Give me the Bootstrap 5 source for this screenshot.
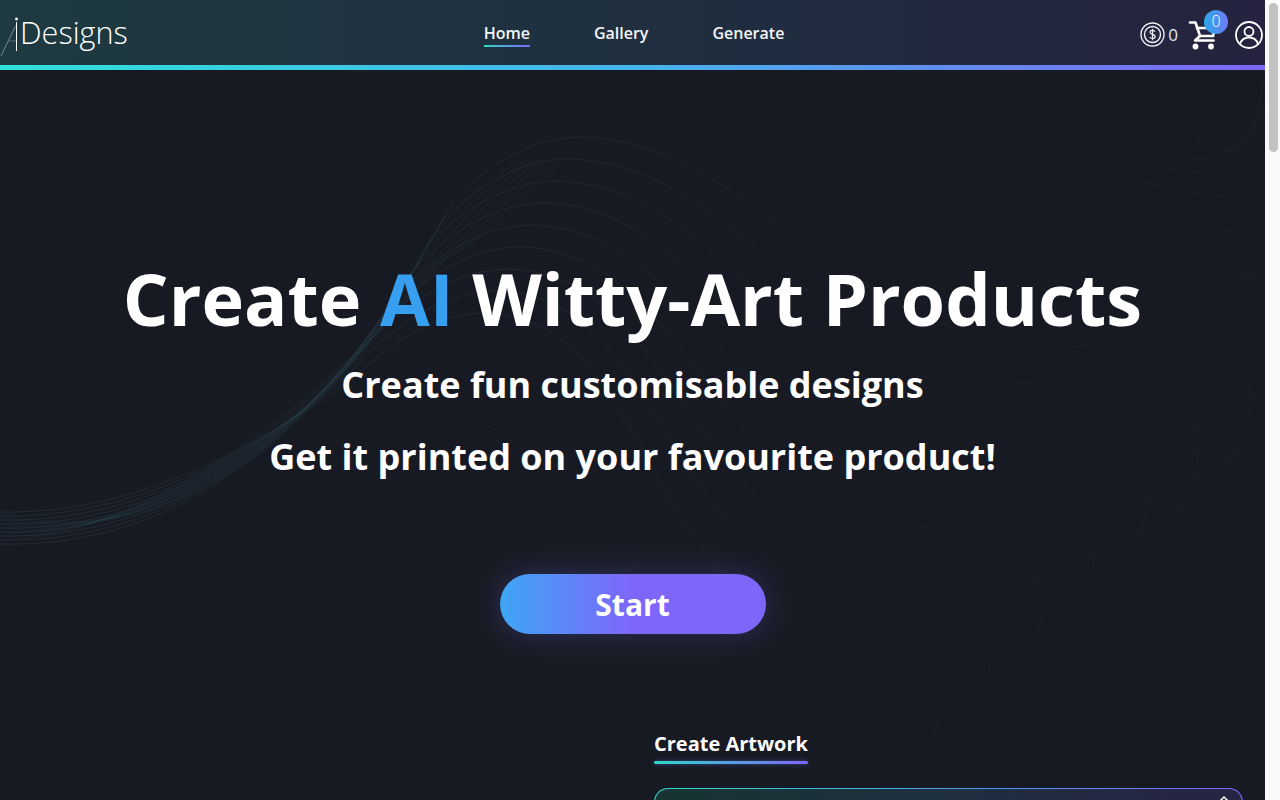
<!DOCTYPE html>
<html lang="en">
<head>
    <meta charset="UTF-8">
    <meta name="viewport" content="width=device-width, initial-scale=1.0">
    <title>iDesigns</title>
    <link rel="stylesheet" href="https://cdn.jsdelivr.net/npm/bootstrap@5.3.0/dist/css/bootstrap.min.css">
    <style>
        html, body {
            height: 100%;
            overflow: hidden;
        }

        body {
            background-color: #181a23;
            color: #fff;
            font-family: "Open Sans", sans-serif;
        }

        .page-main {
            width: 1265px;
            height: 800px;
            overflow: hidden;
        }

        .scroll-rail {
            width: 15px;
            height: 800px;
            padding: 3px 2px 0 4px;
            background: #fafafa;
        }

        .scroll-thumb {
            height: 149px;
            border-radius: 5px;
            background: #c2c2c2;
        }

        .top-bar {
            height: 70px;
            display: grid;
            grid-template-columns: 1fr auto 1fr;
            align-items: center;
            background-color: #1f2f40;
            background-image: linear-gradient(90deg, #1e3a40 0%, #1f2f40 50%, #25233f 100%);
            border-bottom: 5px solid;
            border-image: linear-gradient(90deg, #2fe0dc 0%, #45b4ec 50%, #7e66fb 100%) 1;
        }

        .logo-mark {
            width: 20px;
            height: 44px;
            margin-top: 13px;
        }

        .logo-text {
            font-size: 30.6px;
            font-weight: 300;
            color: #fff;
            line-height: 1;
        }

        .main-links {
            gap: 64px;
            margin-left: 3px;
        }

        .main-links .nav-link {
            color: #f4f5f7;
            font-size: 16px;
            font-weight: 600;
            line-height: 24px;
            padding: 2px 0 1px;
            position: relative;
        }

        .main-links .nav-link.active::after {
            content: "";
            position: absolute;
            left: 0;
            right: 0;
            bottom: -1px;
            height: 2px;
            background: linear-gradient(90deg, #2fd8c8, #7e66fb);
        }

        .user-tools {
            padding-right: 2px;
            padding-top: 4px;
        }

        .coin-count {
            font-size: 17px;
            color: #e8e8ee;
            margin-left: 3px;
            margin-right: 10px;
        }

        .cart-wrap {
            position: relative;
            width: 28px;
            height: 30px;
            margin-right: 19px;
        }

        .cart-count {
            position: absolute;
            left: 16px;
            top: -10px;
            width: 24px;
            height: 24px;
            border-radius: 50%;
            font-size: 16px;
            font-weight: 300;
            line-height: 23px;
            text-align: center;
            background: linear-gradient(90deg, #2aa8e6, #6f7cf8);
            color: #fff;
        }

        .hero-box {
            position: relative;
            background: linear-gradient(180deg, #181a23 0%, #181a23 80%, #16171e 92%);
            min-height: 730px;
        }

        .wave-bg {
            position: absolute;
            left: 0;
            top: 0;
            width: 1265px;
            height: 730px;
        }

        .hero-content {
            position: relative;
            padding-top: 185px;
        }

        .hero-title {
            font-size: 72px;
            font-weight: 700;
            line-height: 86px;
            margin: 0 0 20px;
        }

        .hero-title span {
            color: #369ff0;
        }

        .hero-sub {
            font-size: 36px;
            font-weight: 700;
            line-height: 48px;
            margin: 0 0 24px;
        }

        .start-btn {
            width: 266px;
            height: 60px;
            margin-top: 69px;
            border: 0;
            border-radius: 30px;
            font-size: 30px;
            font-weight: 700;
            color: #fff;
            background: linear-gradient(90deg, #3ea6f4 0%, #7e66fb 50%, #7e66fb 100%);
            box-shadow: 0 0 32px rgba(95, 95, 215, .32);
        }

        .artwork-col {
            margin-left: 654px;
            width: 589px;
            padding-top: 96px;
        }

        .artwork-title {
            display: inline-block;
            font-size: 20px;
            font-weight: 700;
            line-height: 27px;
            margin: 0;
        }

        .artwork-title::after {
            content: "";
            display: block;
            height: 3px;
            margin-top: 4px;
            border-radius: 2px;
            background: linear-gradient(90deg, #2fd8c8, #7e66fb);
            box-shadow: 0 0 4px rgba(90, 130, 230, .5);
        }

        .art-panel {
            height: 300px;
            margin-top: 24px;
            border: 1px solid transparent;
            border-radius: 14px;
            position: relative;
            background:
                linear-gradient(90deg, #173433, #1f2f40 50%, #272445) padding-box,
                linear-gradient(90deg, #2fd8c8, #45a4ec 50%, #7e66fb) border-box;
        }

        .art-chevron {
            position: absolute;
            right: 12px;
            top: 6px;
        }
    </style>
</head>
<body>

<div class="d-flex">
    <div class="page-main">

        <nav class="top-bar">
            <div class="d-flex align-items-center">
                <svg class="logo-mark" viewBox="0 0 20 44" fill="none">
                    <circle cx="16.500" cy="2" r="1.400" fill="#fff"/>
                    <path d="M16.500 5V34" stroke="#fff" stroke-width="1"/>
                    <path d="M15.500 9L1 39" stroke="#8b9aa0" stroke-width=".8"/>
                    <path d="M9 24H16" stroke="#6f8086" stroke-width=".7"/>
                </svg>
                <a class="logo-text text-decoration-none" href="#">Designs</a>
            </div>

            <ul class="nav main-links">
                <li class="nav-item"><a class="nav-link active" href="#">Home</a></li>
                <li class="nav-item"><a class="nav-link" href="#">Gallery</a></li>
                <li class="nav-item"><a class="nav-link" href="#">Generate</a></li>
            </ul>

            <div class="user-tools d-flex align-items-center justify-content-end">
                <svg width="25" height="25" viewBox="0 0 25 25" fill="none" stroke="#f0f0f4">
                    <circle cx="12.500" cy="12.500" r="11.500" stroke-width="1.400"/>
                    <circle cx="12.500" cy="12.500" r="8" stroke-width="1.400"/>
                    <path d="M15 9.800c-.5-1-1.400-1.400-2.500-1.400-1.400 0-2.500.7-2.500 1.900 0 2.800 5.200 1.400 5.200 4.200 0 1.300-1.200 2-2.700 2-1.200 0-2.200-.5-2.700-1.500M12.500 6.800v11.400" stroke-width="1.200"/>
                </svg>
                <span class="coin-count">0</span>
                <div class="cart-wrap">
                    <svg width="28" height="30" viewBox="0 0 28 30" fill="none" stroke="#fff" stroke-width="2.600" stroke-linecap="round" stroke-linejoin="round">
                        <path d="M2 2.500H7.500L12 16H25"/>
                        <path d="M9 8H27L25 16"/>
                        <path d="M12 16L7 20.500H25.500"/>
                        <circle cx="7.500" cy="26.500" r="2.900" fill="#fff" stroke="none"/>
                        <circle cx="23" cy="26.500" r="2.900" fill="#fff" stroke="none"/>
                    </svg>
                    <span class="cart-count">0</span>
                </div>
                <svg width="28" height="28" viewBox="0 0 28 28" fill="none" stroke="#fff" stroke-width="1.800">
                    <circle cx="14" cy="14" r="13"/>
                    <circle cx="14" cy="10.500" r="4.500"/>
                    <path d="M5 23c1.500-4.500 5-6.500 9-6.500s7.500 2 9 6.500"/>
                </svg>
            </div>
        </nav>

        <section class="hero-box">
            <svg class="wave-bg" viewBox="0 70 1265 730" fill="none" id="waves"></svg>
            <div class="hero-content text-center">
                <h1 class="hero-title">Create <span>AI</span> Witty-Art Products</h1>
                <p class="hero-sub">Create fun customisable designs</p>
                <p class="hero-sub">Get it printed on your favourite product!</p>
                <button class="btn start-btn">Start</button>
                <div class="artwork-col text-start">
                    <h2 class="artwork-title">Create Artwork</h2>
                    <div class="art-panel">
                        <svg class="art-chevron" width="12" height="8" viewBox="0 0 12 8" fill="none" stroke="#fff" stroke-width="1.500"><path d="M1 7L6 2L11 7"/></svg>
                    </div>
                </div>
            </div>
        </section>
    </div>

    <div class="scroll-rail"><div class="scroll-thumb"></div></div>
</div>

<script>
    // faint line waves behind the hero
    const svg = document.getElementById("waves");
    let lines = `<defs><linearGradient id="waveStroke" gradientUnits="userSpaceOnUse" x1="0" y1="0" x2="1265" y2="0">
        <stop offset="0" stop-color="#2f5c66"/><stop offset=".45" stop-color="#2a4650"/><stop offset=".7" stop-color="#282d38"/><stop offset="1" stop-color="#2a2f3c"/>
    </linearGradient></defs>`;

    // main family: rises from the lower left, peaks near 580, dips, rises at the right edge
    for (let i = 0; i < 9; i++) {
        const y0 = 544 - i * 4;
        const peakX = 585 - i * 12;
        const peakY = 137 + i * 22;
        const dipX = 1040 - i * 24;
        const dipY = 347 + i * 36;
        const endY = 265 + i * 24;
        lines += `<path d="M0 ${y0} C170 ${y0 + 4} 320 ${450 - i * 6} ${peakX - 130} ${peakY + 60} C${peakX - 70} ${peakY + 5} ${peakX - 30} ${peakY} ${peakX} ${peakY} C${peakX + 170} ${peakY + 10} ${dipX - 210} ${dipY - 20} ${dipX} ${dipY} C${dipX + 90} ${dipY + 2} 1200 ${endY + 50} 1265 ${endY}" stroke="url(#waveStroke)" stroke-opacity=".38" stroke-width=".7"/>`;
    }

    // second family crosses the first to make the mesh on the left
    for (let i = 0; i < 8; i++) {
        const y0 = 512 + i * 4;
        lines += `<path d="M0 ${y0} C130 ${552 - i * 2} 300 ${470 - i * 6} ${390 + i * 8} ${300 - i * 6} C${430 + i * 10} 230 ${470 + i * 10} 190 ${520 + i * 6} 160" stroke="#2c5560" stroke-opacity=".3" stroke-width=".6"/>`;
    }

    // low arcs on the left under the title
    for (let i = 0; i < 6; i++) {
        lines += `<path d="M0 ${400 + i * 10} C100 ${372 + i * 8} 210 ${345 + i * 10} 320 ${332 + i * 14} C420 ${322 + i * 14} 520 ${380 + i * 10} 640 ${520 + i * 10}" stroke="#2a3f47" stroke-opacity=".25" stroke-width=".6"/>`;
    }

    // upper right lines running down to the edge
    for (let i = 0; i < 6; i++) {
        lines += `<path d="M${760 + i * 70} 72 C${900 + i * 60} 130 ${1050 + i * 40} ${190 + i * 6} 1265 ${285 - i * 44}" stroke="#2a2e3a" stroke-opacity=".5" stroke-width=".7"/>`;
    }

    // short curved ribs near the lower right
    for (let i = 0; i < 7; i++) {
        const x = 1240 - i * 52;
        const y = 360 + i * 52;
        lines += `<path d="M${x} ${y} C${x + 18} ${y + 30} ${x + 12} ${y + 70} ${x - 16} ${y + 105}" stroke="#262a35" stroke-opacity=".4" stroke-width=".6"/>`;
    }
    svg.innerHTML = lines;
</script>

<script src="https://cdn.jsdelivr.net/npm/bootstrap@5.3.0/dist/js/bootstrap.bundle.min.js"></script>
</body>
</html>
